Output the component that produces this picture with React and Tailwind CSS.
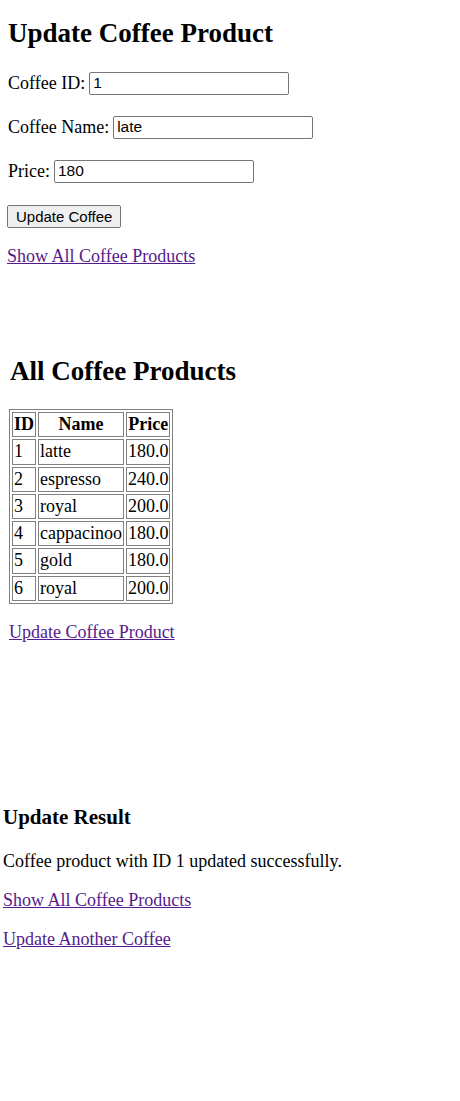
import React from 'react';

const coffees = [
  { id: 1, name: 'latte', price: '180.0' },
  { id: 2, name: 'espresso', price: '240.0' },
  { id: 3, name: 'royal', price: '200.0' },
  { id: 4, name: 'cappacinoo', price: '180.0' },
  { id: 5, name: 'gold', price: '180.0' },
  { id: 6, name: 'royal', price: '200.0' },
];

const serif = "font-['Liberation_Serif','Times_New_Roman',serif]";
const sans = "font-['Liberation_Sans',Arial,sans-serif]";

function Field({ label, value }) {
  return (
    <div className="flex items-center h-[26px] mb-[18px] text-[18px]">
      <span>{label}</span>
      <input
        readOnly
        value={value}
        className={`${sans} ml-[4px] w-[200px] h-[23px] px-[3px] text-[15.5px] text-black border border-[#767676] rounded-[2px] bg-white outline-none`}
      />
    </div>
  );
}

function UpdateForm() {
  return (
    <section className="pl-[7px] pt-[18px] h-[300px]">
      <h2 className="text-[27px] font-bold leading-[31px] mb-[21px] pl-[1px]">Update Coffee Product</h2>
      <div className="pl-[1px]">
        <Field label="Coffee ID:" value="1" />
        <Field label="Coffee Name:" value="late" />
        <Field label="Price:" value="180" />
      </div>
      <button
        className={`${sans} h-[23px] px-[8px] text-[15px] bg-[#efefef] border border-[#767676] rounded-[2px] mt-[3px]`}
      >
        Update Coffee
      </button>
      <div className="mt-[17px] text-[18px] leading-[21px]">
        <a href="#" className="underline text-[#551a8b]">Show All Coffee Products</a>
      </div>
    </section>
  );
}

function ProductTable() {
  return (
    <section className="pl-[9px] pt-[56px] h-[440px]">
      <h2 className="text-[27px] font-bold leading-[31px] pl-[1px] mb-[22px]">All Coffee Products</h2>
      <table className="border border-[#808080] border-separate border-spacing-[2px] text-[18px] leading-[21.3px]">
        <thead>
          <tr>
            <th className="border border-[#808080] px-[1px] py-[1px]">ID</th>
            <th className="border border-[#808080] px-[1px] py-[1px]">Name</th>
            <th className="border border-[#808080] px-[1px] py-[1px]">Price</th>
          </tr>
        </thead>
        <tbody>
          {coffees.map((c) => (
            <tr key={c.id}>
              <td className="border border-[#808080] px-[1px] py-[1px]">{c.id}</td>
              <td className="border border-[#808080] px-[1px] py-[1px]">{c.name}</td>
              <td className="border border-[#808080] px-[1px] py-[1px]">{c.price}</td>
            </tr>
          ))}
        </tbody>
      </table>
      <div className="mt-[18px] text-[18px] leading-[21px]">
        <a href="#" className="underline text-[#551a8b]">Update Coffee Product</a>
      </div>
    </section>
  );
}

function UpdateResult() {
  return (
    <section className="pl-[3px] pt-[65px] h-[361px]">
      <h3 className="text-[21px] font-bold leading-[24px] mb-[22px]">Update Result</h3>
      <p className="text-[18px] leading-[21px] mb-[18px]">Coffee product with ID 1 updated successfully.</p>
      <p className="text-[18px] leading-[21px] mb-[18px]">
        <a href="#" className="underline text-[#551a8b]">Show All Coffee Products</a>
      </p>
      <p className="text-[18px] leading-[21px]">
        <a href="#" className="underline text-[#551a8b]">Update Another Coffee</a>
      </p>
    </section>
  );
}

export default function App() {
  return (
    <div className={`${serif} bg-white text-black w-[460px] h-[1101px] overflow-hidden`}>
      <UpdateForm />
      <ProductTable />
      <UpdateResult />
    </div>
  );
}
